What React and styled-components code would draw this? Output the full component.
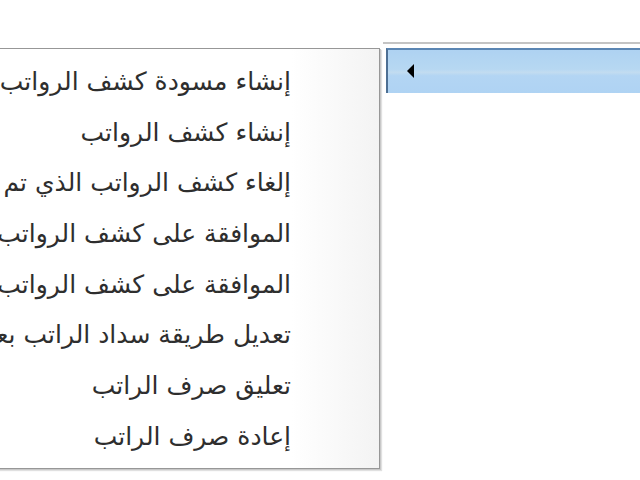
import React from 'react';
import styled, { createGlobalStyle } from 'styled-components';

const GlobalStyle = createGlobalStyle`
  html, body {
    margin: 0;
    padding: 0;
    background: #ffffff;
  }
  body {
    font-family: "DejaVu Sans", "Noto Sans", sans-serif;
  }
`;

const items = [
  'إنشاء مسودة كشف الرواتب',
  'إنشاء كشف الرواتب',
  'إلغاء كشف الرواتب الذي تم إنشاؤه',
  'الموافقة على كشف الرواتب',
  'الموافقة على كشف الرواتب النهائي',
  'تعديل طريقة سداد الراتب بعد الإنشاء',
  'تعليق صرف الراتب',
  'إعادة صرف الراتب',
];

const Page = styled.div`
  width: 640px;
  height: 480px;
  overflow: hidden;
  display: flex;
  align-items: flex-start;
  padding-top: 42px;
  box-sizing: border-box;
`;

const Menu = styled.div`
  flex: 0 0 auto;
  width: 430px;
  margin-left: -50px;
  margin-top: 6px;
  box-sizing: border-box;
  border: 1px solid #979797;
  box-shadow: 1px 1px 0 #c8c8c8, 2px 2px 1px rgba(0, 0, 0, 0.12);
  background: linear-gradient(to right, #ffffff 0, #ffffff 340px, #f3f3f3 430px);
  padding: 7px 0 6px;
  direction: rtl;
  overflow: hidden;
`;

const Item = styled.div`
  height: 50.7px;
  display: flex;
  align-items: center;
  padding-right: 88px;
  white-space: nowrap;
  font-size: 25px;
  color: #2e2e2e;
`;

const Parent = styled.div`
  flex: 1 1 auto;
  margin-left: 3px;
  border-top: 2px solid #c4c4c4;
  padding: 4px 0 0 3px;
`;

const ParentBar = styled.div`
  height: 45px;
  box-sizing: border-box;
  border-top: 2px solid #5b86b3;
  border-left: 2px solid #4d6f93;
  background: linear-gradient(to bottom, #aed2f2 0%, #b7d8f2 45%, #c2dcf0 52%, #b3d5f3 60%, #afd3f3 100%);
  display: flex;
  align-items: center;
  padding-left: 19px;
`;

const Arrow = styled.span`
  width: 0;
  height: 0;
  margin-top: -2px;
  border-top: 7px solid transparent;
  border-bottom: 7px solid transparent;
  border-right: 7px solid #000000;
`;

export default function App() {
  return (
    <>
      <GlobalStyle />
      <Page>
        <Menu>
          {items.map((text) => (
            <Item key={text}>{text}</Item>
          ))}
        </Menu>
        <Parent>
          <ParentBar>
            <Arrow />
          </ParentBar>
        </Parent>
      </Page>
    </>
  );
}
